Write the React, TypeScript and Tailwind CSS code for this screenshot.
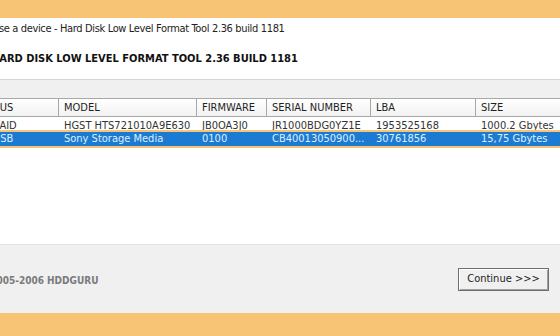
export default function App() {
  const font = { fontFamily: '"DejaVu Sans Condensed", "DejaVu Sans", sans-serif' };
  return (
    <div className="w-[560px] h-[336px] overflow-hidden bg-[#f7c475] flex flex-col" style={font}>
      <div className="h-[18px] shrink-0" />
      <div className="h-[62px] shrink-0 bg-white border-b border-[#d4d4d4] flex flex-col">
        <div className="-ml-[25px] mt-[4px] h-[14px] text-[11px] leading-[14px] tracking-[-0.35px] text-[#222] whitespace-nowrap">
          Choose a device - Hard Disk Low Level Format Tool 2.36 build 1181
        </div>
        <div className="-ml-[9px] mt-[16px] h-[14px] text-[11px] leading-[14px] font-bold text-[#111] whitespace-nowrap">
          HARD DISK LOW LEVEL FORMAT TOOL 2.36 BUILD 1181
        </div>
      </div>
      <div className="flex-1 bg-[#f0f0f0] flex flex-col">
        <div className="mt-[18px] h-[147px] bg-white border-t border-[#a8a8a8] border-b border-b-[#e2e2e2] flex flex-col">
          <div className="h-[18px] flex text-[11px] leading-[18px] text-[#1e1e1e] bg-gradient-to-b from-white to-[#f2f2f2] border-b border-[#a8a8a8] whitespace-nowrap">
            <div className="w-[71px] shrink-0 border-r border-[#a8a8a8] -ml-[12px] pl-[5px]">BUS</div>
            <div className="w-[138px] shrink-0 border-r border-[#a8a8a8] pl-[5px]">MODEL</div>
            <div className="w-[70px] shrink-0 border-r border-[#a8a8a8] pl-[5px]">FIRMWARE</div>
            <div className="w-[104px] shrink-0 border-r border-[#a8a8a8] pl-[5px]">SERIAL NUMBER</div>
            <div className="w-[105px] shrink-0 border-r border-[#a8a8a8] pl-[5px]">LBA</div>
            <div className="flex-1 pl-[5px]">SIZE</div>
          </div>
          <div className="h-[13px] flex text-[11px] leading-[17px] text-[#333] whitespace-nowrap">
            <div className="w-[71px] shrink-0 -ml-[12px] pl-[5px]">RAID</div>
            <div className="w-[138px] shrink-0 pl-[5px]">HGST HTS721010A9E630</div>
            <div className="w-[70px] shrink-0 pl-[5px]">JB0OA3J0</div>
            <div className="w-[104px] shrink-0 pl-[5px] overflow-hidden">JR1000BDG0YZ1E</div>
            <div className="w-[105px] shrink-0 pl-[5px]">1953525168</div>
            <div className="flex-1 pl-[5px]">1000.2 Gbytes</div>
          </div>
          <div className="h-[18px] border-y-2 border-[#f7c475] flex text-[11px] leading-[14px] text-[#dfeefc] bg-[#1b7bd3] whitespace-nowrap">
            <div className="w-[71px] shrink-0 -ml-[12px] pl-[5px]">USB</div>
            <div className="w-[138px] shrink-0 pl-[5px]">Sony Storage Media</div>
            <div className="w-[70px] shrink-0 pl-[5px]">0100</div>
            <div className="w-[104px] shrink-0 pl-[5px] overflow-hidden">CB40013050900...</div>
            <div className="w-[105px] shrink-0 pl-[5px]">30761856</div>
            <div className="flex-1 pl-[5px]">15,75 Gbytes</div>
          </div>
        </div>
        <div className="flex-1 flex items-center justify-between pr-[11px]">
          <div className="-ml-[22px] mt-[2px] text-[10px] font-bold text-[#7b7b7b] whitespace-nowrap">
            © 2005-2006 HDDGURU
          </div>
          <button className="w-[91px] h-[23px] bg-[#f0f0f0] border border-[#6e6e6e] shadow-[inset_1px_1px_0_#ffffff,inset_-1px_-1px_0_#a0a0a0] text-[11px] text-[#222] flex items-center justify-center">
            Continue &gt;&gt;&gt;
          </button>
        </div>
      </div>
      <div className="h-[23px] shrink-0" />
    </div>
  );
}
